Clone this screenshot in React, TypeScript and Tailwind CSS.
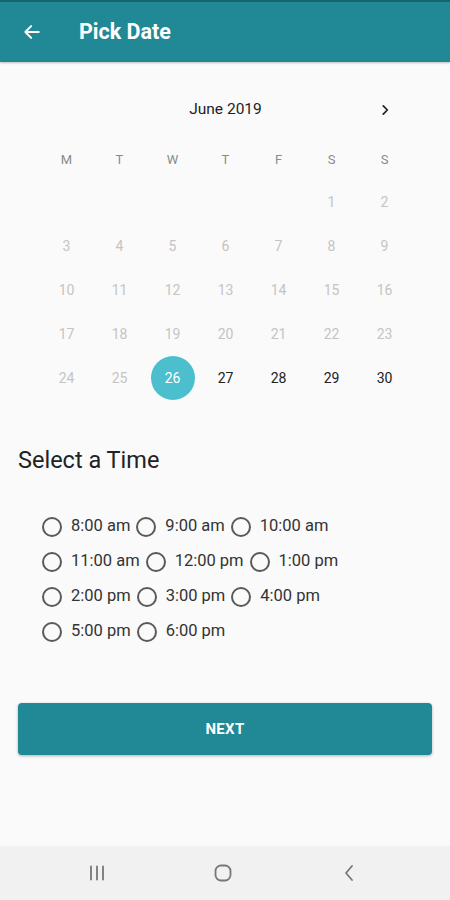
import React from "react";

const weekdays = ["M", "T", "W", "T", "F", "S", "S"];
const rows: (number | null)[][] = [
  [null, null, null, null, null, 1, 2],
  [3, 4, 5, 6, 7, 8, 9],
  [10, 11, 12, 13, 14, 15, 16],
  [17, 18, 19, 20, 21, 22, 23],
  [24, 25, 26, 27, 28, 29, 30],
];
const times = [
  "8:00 am", "9:00 am", "10:00 am",
  "11:00 am", "12:00 pm", "1:00 pm",
  "2:00 pm", "3:00 pm", "4:00 pm",
  "5:00 pm", "6:00 pm",
];

export default function App() {
  return (
    <div className="w-[450px] h-[900px] flex flex-col bg-[#fafafa]" style={{ fontFamily: "Roboto, 'Noto Sans', sans-serif" }}>
      <div className="h-[2px] bg-[#17656f]" />
      <div className="h-[60px] bg-[#218896] flex items-center shadow-[0_1px_2px_rgba(0,0,0,0.25)] relative z-10">
        <svg width="20" height="20" viewBox="0 0 24 24" className="ml-[22px]" fill="none" stroke="white" strokeWidth="2.4" strokeLinecap="round" strokeLinejoin="round">
          <path d="M20 12H4M11 5l-7 7 7 7" />
        </svg>
        <span className="ml-[37px] text-white text-[21.5px] font-bold">Pick Date</span>
      </div>

      <div className="mx-[40px] w-[371px] mt-[26px]">
        <div className="h-[44px] grid grid-cols-7 items-center">
          <div className="col-start-3 col-span-3 text-center text-[15.5px] text-[#222]">June 2019</div>
          <div className="col-start-7 flex justify-center">
            <svg width="14" height="14" viewBox="0 0 24 24" fill="none" stroke="#222" strokeWidth="3" strokeLinecap="round" strokeLinejoin="round">
              <path d="M9 5l7 7-7 7" />
            </svg>
          </div>
        </div>
        <div className="mt-[8px] h-[40px] grid grid-cols-7 items-center">
          {weekdays.map((d, i) => (
            <div key={i} className="text-center text-[13px] text-[#8a8a8a]">{d}</div>
          ))}
        </div>
        {rows.map((r, ri) => (
          <div key={ri} className="h-[44px] grid grid-cols-7 items-center">
            {r.map((d, i) => (
              <div key={i} className="flex justify-center items-center">
                {d === 26 ? (
                  <div className="w-[44px] h-[44px] rounded-full bg-[#4cbfcf] flex items-center justify-center text-white text-[14px]">26</div>
                ) : (
                  <span className={`text-[14px] ${d !== null && d > 26 ? "text-[#222]" : "text-[#c4c4c4]"}`}>{d ?? ""}</span>
                )}
              </div>
            ))}
          </div>
        ))}
      </div>

      <div className="ml-[18px] mt-[46px] text-[23.5px] leading-[28px] text-[#222]">Select a Time</div>

      <div className="ml-[42px] w-[330px] mt-[35px] flex flex-wrap">
        {times.map((t) => (
          <div key={t} className="h-[35px] flex items-center mr-[6px]">
            <div className="w-[20px] h-[20px] rounded-full border-2 border-[#5a5a5a]" />
            <span className="ml-[9px] text-[16.5px] text-[#333]">{t}</span>
          </div>
        ))}
      </div>

      <div className="mx-[18px] mt-[54px] h-[52px] rounded-[4px] bg-[#218896] shadow-[0_1px_3px_rgba(0,0,0,0.3)] flex items-center justify-center">
        <span className="text-white text-[15px] font-bold tracking-[0.3px]">NEXT</span>
      </div>

      <div className="flex-1" />

      <div className="h-[54px] bg-[#f1f1f1] grid grid-cols-3 items-center pl-[34px] pr-[38px]">
        <div className="flex justify-center">
          <svg width="18" height="16" viewBox="0 0 18 16" fill="none" stroke="#777" strokeWidth="1.8" strokeLinecap="round">
            <path d="M3 1.5v13M9 1.5v13M15 1.5v13" />
          </svg>
        </div>
        <div className="flex justify-center">
          <svg width="18" height="18" viewBox="0 0 18 18" fill="none" stroke="#777" strokeWidth="1.8">
            <rect x="1.5" y="1.5" width="15" height="15" rx="5.5" />
          </svg>
        </div>
        <div className="flex justify-center">
          <svg width="12" height="18" viewBox="0 0 12 18" fill="none" stroke="#777" strokeWidth="1.8" strokeLinecap="round" strokeLinejoin="round">
            <path d="M9 2L3 9l6 7" />
          </svg>
        </div>
      </div>
    </div>
  );
}
